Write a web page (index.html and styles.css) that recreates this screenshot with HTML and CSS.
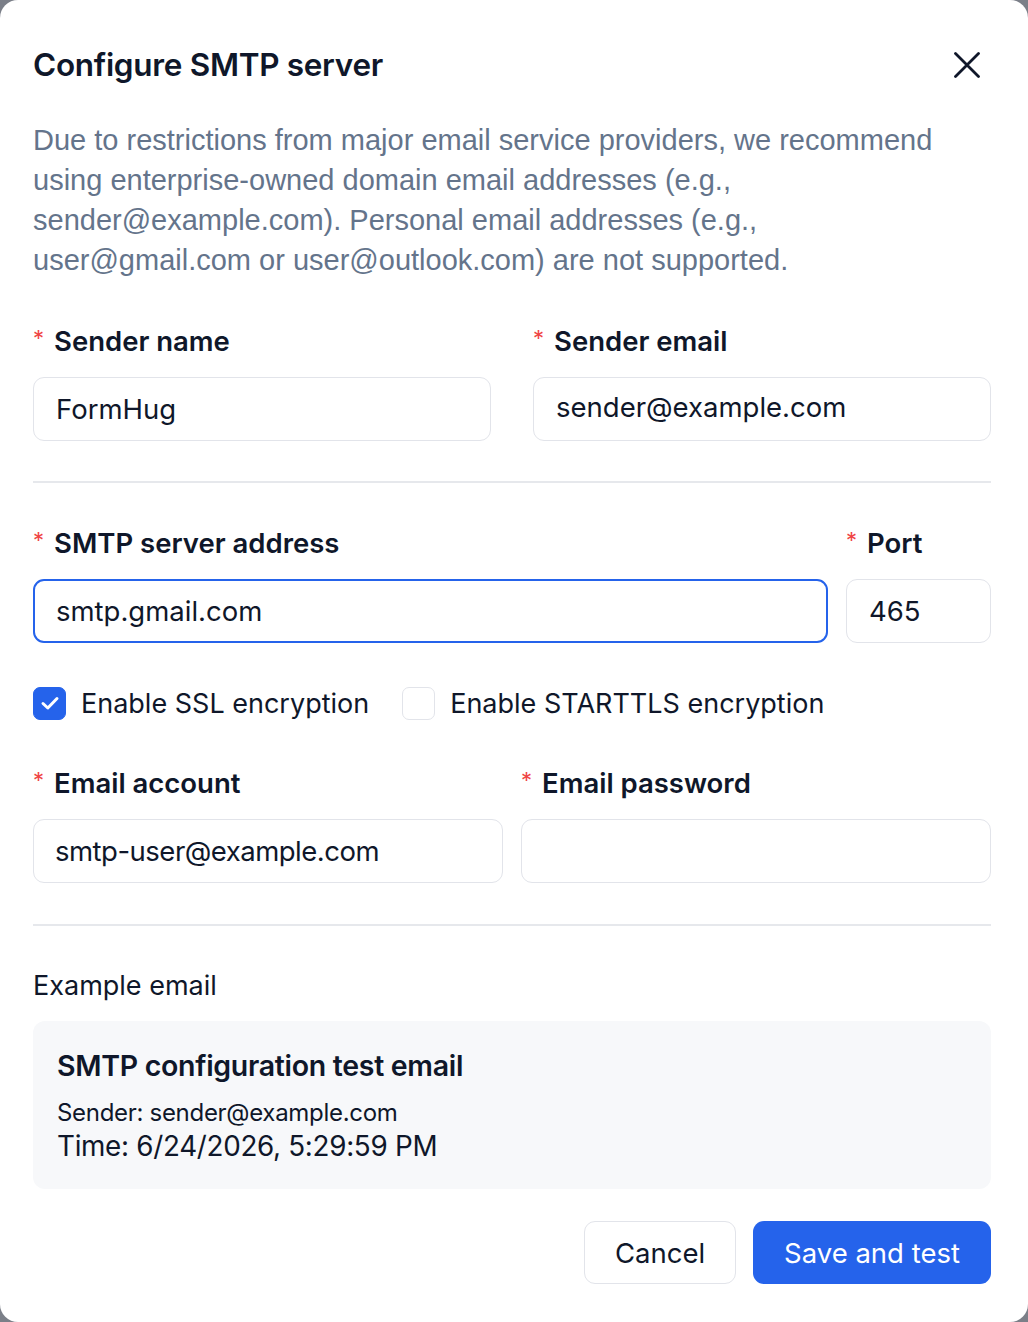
FILE: index.html
```html
<!DOCTYPE html>
<html lang="en">
<head>
<meta charset="utf-8">
<title>Configure SMTP server</title>
<link rel="stylesheet" href="styles.css">
</head>
<body>
<div class="dialog">
  <div class="header">
    <h1 class="title">Configure SMTP server</h1>
    <button class="close" aria-label="Close">
      <svg width="26" height="26" viewBox="0 0 26 26"><path d="M1.5 1.5 L24.5 24.5 M24.5 1.5 L1.5 24.5" stroke="#0f172a" stroke-width="2.8" stroke-linecap="round" fill="none"/></svg>
    </button>
  </div>
  <p class="desc">Due to restrictions from major email service providers, we recommend<br>using enterprise-owned domain email addresses (e.g.,<br>sender@example.com). Personal email addresses (e.g.,<br>user@gmail.com or user@outlook.com) are not supported.</p>

  <div class="row row-sender">
    <div class="field">
      <label class="label"><span class="req">*</span>Sender name</label>
      <div class="input">FormHug</div>
    </div>
    <div class="field">
      <label class="label"><span class="req">*</span>Sender email</label>
      <div class="input input-up">sender@example.com</div>
    </div>
  </div>

  <hr class="divider">

  <div class="row row-server">
    <div class="field grow">
      <label class="label"><span class="req">*</span>SMTP server address</label>
      <div class="input focus">smtp.gmail.com</div>
    </div>
    <div class="field port">
      <label class="label"><span class="req">*</span>Port</label>
      <div class="input">465</div>
    </div>
  </div>

  <div class="checks">
    <label class="check">
      <span class="box on"><svg width="20" height="16" viewBox="0 0 20 16"><path d="M3 8.5 L7.8 13 L17 3.5" stroke="#fff" stroke-width="3" fill="none" stroke-linecap="round" stroke-linejoin="round"/></svg></span>
      Enable SSL encryption
    </label>
    <label class="check">
      <span class="box"></span>
      Enable STARTTLS encryption
    </label>
  </div>

  <div class="row row-account">
    <div class="field">
      <label class="label"><span class="req">*</span>Email account</label>
      <div class="input input-tight">smtp-user@example.com</div>
    </div>
    <div class="field">
      <label class="label"><span class="req">*</span>Email password</label>
      <div class="input"></div>
    </div>
  </div>

  <hr class="divider divider-2">

  <div class="example-label">Example email</div>
  <div class="example">
    <div class="ex-title">SMTP configuration test email</div>
    <div class="ex-sender">Sender: sender@example.com</div>
    <div class="ex-time">Time: 6/24/2026, 5:29:59 PM</div>
  </div>

  <div class="footer">
    <button class="btn btn-cancel">Cancel</button>
    <button class="btn btn-primary">Save and test</button>
  </div>
</div>
</body>
</html>
```

FILE: styles.css
```css
html, body {
  margin: 0;
  padding: 0;
  background: #7b7f88;
  height: 100%;
}
body {
  font-family: Inter, "Noto Sans", sans-serif;
  color: #0f172a;
}
.dialog {
  background: #fff;
  border-radius: 18px;
  height: 1322px;
  box-sizing: border-box;
  padding: 0 37px 0 33px;
}
.header {
  display: flex;
  align-items: center;
  justify-content: space-between;
  padding-top: 45px;
  height: 40px;
}
.title {
  margin: 0;
  font-size: 31.5px;
  font-weight: 600;
  letter-spacing: -0.3px;
  line-height: 40px;
}
.close {
  border: none;
  background: none;
  padding: 0;
  margin-right: 11px;
  width: 26px;
  height: 26px;
  display: flex;
}
.desc {
  font-family: "Liberation Sans", Arial, sans-serif;
  font-size: 29px;
  line-height: 40px;
  color: #64748b;
  margin: 35px 0 0;
}
.row {
  display: flex;
}
.row-sender { gap: 42px; margin-top: 45px; }
.row-server { gap: 18px; margin-top: 44px; }
.row-account { gap: 18px; margin-top: 47px; }
.field {
  flex: 1;
  display: flex;
  flex-direction: column;
}
.field.grow { flex: 1; }
.field.port { flex: 0 0 145px; }
.label {
  font-size: 27.5px;
  font-weight: 600;
  line-height: 32px;
  display: flex;
  align-items: center;
}
.req {
  color: #ef4444;
  font-weight: 400;
  font-size: 22px;
  width: 21px;
  margin-top: -6px;
}
.input {
  margin-top: 20px;
  height: 62px;
  border: 1px solid #e2e4ea;
  border-radius: 11px;
  box-sizing: content-box;
  padding: 0 22px;
  font-size: 27.5px;
  line-height: 62px;
  color: #0f172a;
}
.input-up { line-height: 58px; }
.input-tight { padding-left: 21px; letter-spacing: -0.5px; }
.input.focus {
  border: 2px solid #2563eb;
  height: 60px;
  line-height: 60px;
  padding: 0 21px;
}
.divider {
  border: none;
  border-top: 2px solid #e6e8ec;
  margin: 40px 0 0;
  height: 0;
}
.divider-2 { margin-top: 41px; }
.checks {
  display: flex;
  gap: 33px;
  margin-top: 43px;
  height: 34px;
  align-items: center;
}
.check {
  display: flex;
  align-items: center;
  gap: 15px;
  font-size: 27px;
}
.box {
  width: 31px;
  height: 31px;
  border: 1px solid #e2e4ea;
  border-radius: 7px;
  display: flex;
  align-items: center;
  justify-content: center;
}
.box.on {
  background: #2563eb;
  border-color: #2563eb;
}
.example-label {
  margin-top: 43px;
  font-size: 27px;
  line-height: 34px;
}
.example {
  margin-top: 18px;
  background: #f7f8fa;
  border-radius: 12px;
  padding: 28px 24px 25px;
}
.ex-title {
  font-size: 28.5px;
  font-weight: 600;
  letter-spacing: -0.3px;
  line-height: 34px;
}
.ex-sender {
  margin-top: 15px;
  font-size: 24px;
  line-height: 30px;
  letter-spacing: -0.3px;
}
.ex-time {
  font-size: 27.8px;
  line-height: 36px;
  letter-spacing: -0.3px;
}
.footer {
  display: flex;
  justify-content: flex-end;
  gap: 17px;
  margin-top: 32px;
}
.btn {
  font-family: Inter, "Noto Sans", sans-serif;
  font-size: 27.5px;
  height: 63px;
  border-radius: 11px;
  padding: 0;
}
.btn-cancel {
  width: 152px;
  background: #fff;
  border: 1px solid #e2e4ea;
  color: #0f172a;
}
.btn-primary {
  width: 238px;
  background: #2563eb;
  border: none;
  color: #fff;
}
```
